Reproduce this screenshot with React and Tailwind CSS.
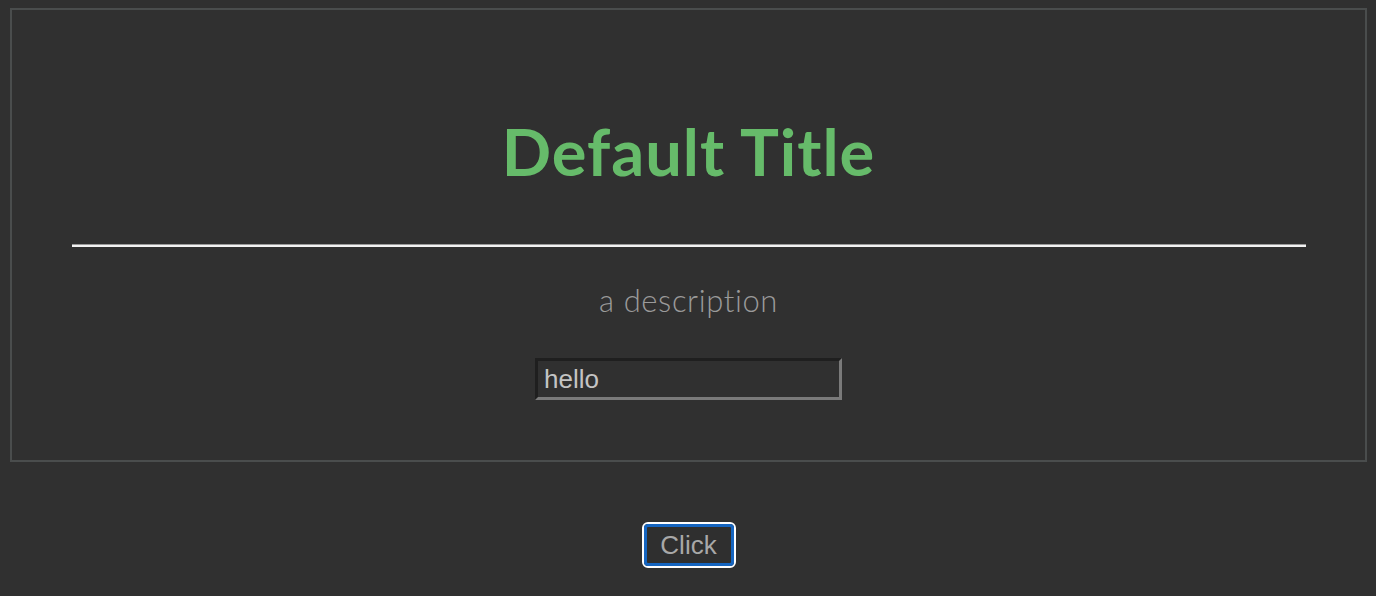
export default function App() {
  return (
    <div className="min-h-[596px] w-full bg-[#303030] pt-2 pl-[10px] pr-[9px]">
      <div className="flex flex-col items-center border-2 border-[#4a4d4d] h-[454px] pt-[109px]">
        <h1
          className="text-[65px] leading-none font-bold text-[#66bb6a] tracking-[1px]"
          style={{ fontFamily: "Lato, 'Noto Sans', sans-serif" }}
        >
          Default Title
        </h1>
        <div className="mt-[60px] w-[1234px] border-t border-[#9a9a9a] border-b-2 border-b-[#f2f2f2]" />
        <p
          className="mt-[38px] text-[31px] leading-none font-light text-[#9a9a9a] tracking-[0.6px]"
          style={{ fontFamily: "Lato, 'Noto Sans', sans-serif" }}
        >
          a description
        </p>
        <input
          defaultValue="hello"
          className="mt-[42px] w-[307px] h-[42px] bg-[#303030] border-[3px] border-t-[#1f1f1f] border-l-[#1f1f1f] border-r-[#7a7a7a] border-b-[#7a7a7a] px-[6px] text-[26px] text-[#c4c4c4] outline-none"
          style={{ fontFamily: "'Liberation Sans', Arial, sans-serif" }}
        />
      </div>
      <div className="flex justify-center mt-[60px]">
        <button
          className="h-[46px] w-[94px] rounded-[6px] border-2 border-white bg-[#2f2f2f] p-0"
        >
          <span
            className="flex h-full w-full items-center justify-center rounded-[4px] border-[3px] border-[#1565c0] text-[26px] text-[#a8a8a8]"
            style={{ fontFamily: "'Liberation Sans', Arial, sans-serif" }}
          >
            Click
          </span>
        </button>
      </div>
    </div>
  );
}
